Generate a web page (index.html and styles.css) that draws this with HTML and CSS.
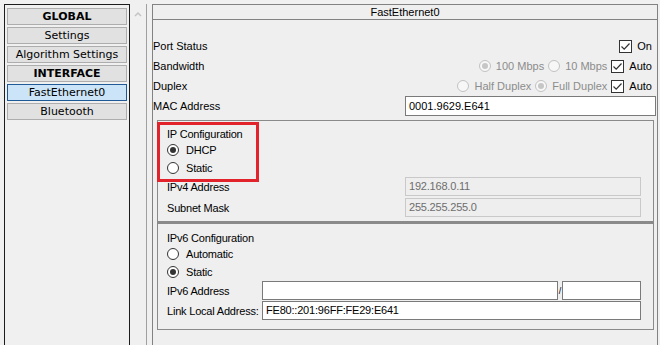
FILE: index.html
```html
<!DOCTYPE html>
<html lang="en">
<head>
    <meta charset="UTF-8">
    <title>FastEthernet0</title>
    <link rel="stylesheet" href="styles.css">
</head>
<body>
    <div class="app">
        <aside class="nav">
            <div class="nav-item head">GLOBAL</div>
            <div class="nav-item">Settings</div>
            <div class="nav-item">Algorithm Settings</div>
            <div class="nav-item head">INTERFACE</div>
            <div class="nav-item active">FastEthernet0</div>
            <div class="nav-item">Bluetooth</div>
        </aside>

        <div class="scrollbar">
            <svg width="8" height="6" viewBox="0 0 8 6">
                <polyline points="1,5 4,2 7,5" fill="none" stroke="#c4c4c4" stroke-width="1.5"/>
            </svg>
        </div>

        <main class="panel">
            <div class="panel-title">FastEthernet0</div>
            <div class="panel-body">
                <div class="row">
                    <span class="label">Port Status</span>
                    <div class="controls">
                        <span class="check"><svg width="11" height="11" viewBox="0 0 11 11"><polyline points="1.5,5.5 4.2,8.2 9.5,2.5" fill="none" stroke="#333" stroke-width="1.2"/></svg></span>
                        <span class="opt-text">On</span>
                    </div>
                </div>
                <div class="row">
                    <span class="label">Bandwidth</span>
                    <div class="controls">
                        <span class="radio on disabled"></span>
                        <span class="opt-text muted">100 Mbps</span>
                        <span class="radio disabled"></span>
                        <span class="opt-text muted">10 Mbps</span>
                        <span class="check"><svg width="11" height="11" viewBox="0 0 11 11"><polyline points="1.5,5.5 4.2,8.2 9.5,2.5" fill="none" stroke="#333" stroke-width="1.2"/></svg></span>
                        <span class="opt-text">Auto</span>
                    </div>
                </div>
                <div class="row">
                    <span class="label">Duplex</span>
                    <div class="controls">
                        <span class="radio disabled"></span>
                        <span class="opt-text muted">Half Duplex</span>
                        <span class="radio on disabled"></span>
                        <span class="opt-text muted">Full Duplex</span>
                        <span class="check"><svg width="11" height="11" viewBox="0 0 11 11"><polyline points="1.5,5.5 4.2,8.2 9.5,2.5" fill="none" stroke="#333" stroke-width="1.2"/></svg></span>
                        <span class="opt-text">Auto</span>
                    </div>
                </div>
                <div class="row mac">
                    <span class="label">MAC Address</span>
                    <div class="field">0001.9629.E641</div>
                </div>

                <div class="group ip4">
                    <div class="highlight"></div>
                    <div class="group-title">IP Configuration</div>
                    <div class="opt"><span class="radio on"></span>DHCP</div>
                    <div class="opt"><span class="radio"></span>Static</div>
                    <div class="frow">
                        <span>IPv4 Address</span>
                        <div class="field disabled">192.168.0.11</div>
                    </div>
                    <div class="frow">
                        <span>Subnet Mask</span>
                        <div class="field disabled">255.255.255.0</div>
                    </div>
                </div>

                <div class="group ip6">
                    <div class="group-title">IPv6 Configuration</div>
                    <div class="opt"><span class="radio"></span>Automatic</div>
                    <div class="opt"><span class="radio on"></span>Static</div>
                    <div class="frow">
                        <span>IPv6 Address</span>
                        <div class="prefix-wrap">
                            <div class="field"></div>
                            <span class="slash">/</span>
                            <div class="field prefix"></div>
                        </div>
                    </div>
                    <div class="frow">
                        <span>Link Local Address:</span>
                        <div class="field">FE80::201:96FF:FE29:E641</div>
                    </div>
                </div>
            </div>
        </main>
    </div>
</body>
</html>
```

FILE: styles.css
```css
body {
    margin: 0;
    background-color: #f0f0f0;
    font-family: "Liberation Sans", Arial, sans-serif;
    font-size: 11px;
    color: #000;
    height: 345px;
    overflow: hidden;
}
.app {
    display: flex;
    padding: 4px 0 0 4px;
    height: 345px;
    box-sizing: border-box;
}
.nav {
    width: 120px;
    border: 1px solid #1c1c1c;
    border-bottom: none;
    padding: 3px 2px 0;
    display: flex;
    flex-direction: column;
    gap: 2px;
    font-family: "DejaVu Sans", Verdana, sans-serif;
    font-size: 11px;
}
.nav-item {
    height: 17px;
    box-sizing: border-box;
    border: 1px solid #adadad;
    background-color: #e1e1e1;
    text-align: center;
    line-height: 15px;
    white-space: nowrap;
}
.nav-item.head {
    font-weight: bold;
}
.nav-item.active {
    background-color: #cce4f7;
    border-color: #1f5a96;
}
.scrollbar {
    width: 16px;
    border-right: 1px solid #a0a0a0;
    display: flex;
    justify-content: center;
    align-items: flex-start;
    padding-top: 7px;
}
.panel {
    width: 504px;
    margin-left: 5px;
    border: 1px solid #828282;
    border-bottom: none;
    background-color: #efefef;
}
.panel-title {
    height: 14px;
    line-height: 14px;
    text-align: center;
    border-bottom: 1px solid #828282;
}
.panel-body {
    padding: 16px 1px 0 0;
}
.row {
    height: 20px;
    display: flex;
    align-items: center;
    justify-content: space-between;
}
.controls {
    display: flex;
    align-items: center;
    padding-right: 4px;
}
.opt-text {
    margin-left: 5px;
    margin-right: 4px;
}
.opt-text:last-child {
    margin-right: 0;
}
.muted {
    color: #8c8c8c;
}
.check {
    width: 13px;
    height: 13px;
    box-sizing: border-box;
    border: 1px solid #333;
    background-color: #fff;
    display: flex;
    align-items: center;
    justify-content: center;
}
.radio {
    width: 12px;
    height: 12px;
    box-sizing: border-box;
    border: 1px solid #333;
    border-radius: 50%;
    background-color: #fff;
    display: inline-flex;
    align-items: center;
    justify-content: center;
    flex-shrink: 0;
}
.radio.on::after {
    content: "";
    width: 6px;
    height: 6px;
    border-radius: 50%;
    background-color: #333;
}
.radio.disabled {
    border-color: #c2c2c2;
    background-color: #f7f7f7;
}
.radio.disabled.on::after {
    background-color: #c6c6c6;
}
.row.mac {
    display: grid;
    grid-template-columns: 252px 1fr;
}
.field {
    height: 20px;
    box-sizing: border-box;
    border: 1px solid #7a7a7a;
    background-color: #fff;
    padding-left: 3px;
    line-height: 18px;
    white-space: nowrap;
}
.field.disabled {
    background-color: #eeeeee;
    border-color: #c9c9c9;
    color: #6d6d6d;
}
.group {
    position: relative;
    margin: 0 2px 0 4px;
    border: 1px solid #8a8a8a;
    padding-left: 9px;
    padding-right: 12px;
    letter-spacing: -0.2px;
}
.group.ip4 {
    margin-top: 4px;
    padding-top: 6px;
    padding-bottom: 4px;
}
.group.ip6 {
    border-top-width: 2px;
    padding-top: 7px;
    padding-bottom: 9px;
}
.group-title {
    height: 14px;
    line-height: 14px;
}
.opt {
    height: 18px;
    display: flex;
    align-items: center;
    gap: 7px;
}
.frow {
    display: grid;
    grid-template-columns: 238px 1fr;
    align-items: center;
    margin-bottom: 2px;
}
.frow:last-child {
    margin-bottom: 0;
}
.frow .field {
    height: 19px;
    line-height: 17px;
}
.ip6 .frow {
    grid-template-columns: 95px 1fr;
    margin-bottom: 1px;
}
.ip6 .frow:last-child {
    margin-bottom: 0;
}
.prefix-wrap {
    display: flex;
    align-items: center;
}
.prefix-wrap .field {
    flex: 1;
}
.prefix-wrap .field.prefix {
    flex: 0 0 79px;
}
.slash {
    width: 4px;
    text-align: center;
    font-size: 9px;
}
.highlight {
    position: absolute;
    left: -1px;
    top: 1px;
    width: 96px;
    height: 54px;
    border: 3px solid #e3232c;
}
```
